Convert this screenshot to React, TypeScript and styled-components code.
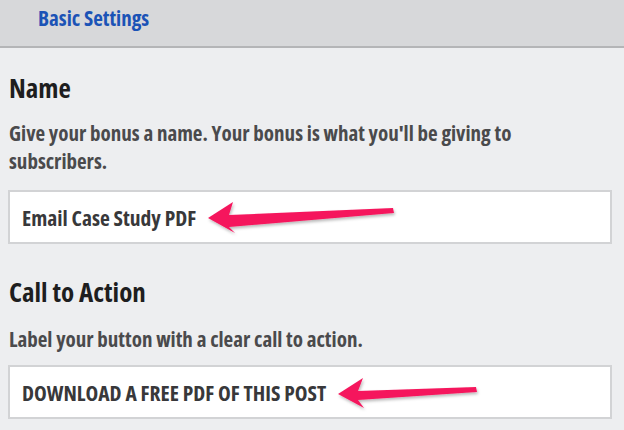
import React from "react";
import styled, { createGlobalStyle } from "styled-components";

const Global = createGlobalStyle`
  html, body { margin: 0; padding: 0; }
  body {
    background: #edeef0;
    font-family: "Open Sans", "Liberation Sans", sans-serif;
    font-stretch: 75%;
    width: 624px;
    height: 430px;
    overflow: hidden;
  }
`;

const Page = styled.div`
  width: 624px;
  height: 430px;
  background: #edeef0;
  display: flex;
  flex-direction: column;
`;

const Header = styled.div`
  height: 46px;
  background: #d7d8da;
  border-bottom: 2px solid #b4b5b7;
  display: flex;
  align-items: flex-start;
  padding-left: 38px;
  flex-shrink: 0;
`;

const HeaderTitle = styled.div`
  color: #1b53b6;
  font-weight: 700;
  font-size: 21px;
  font-stretch: 75%;
  line-height: 36px;
`;

const Body = styled.div`
  padding: 0 12px 0 8px;
  display: flex;
  flex-direction: column;
`;

const Section = styled.section<{ $top: number }>`
  display: flex;
  flex-direction: column;
  margin-top: ${(p) => p.$top}px;
`;

const Heading = styled.h2`
  margin: 0 0 0 1px;
  font-size: 27px;
  font-weight: 700;
  font-stretch: 75%;
  color: #1e1e1f;
  line-height: 32px;
`;

const Description = styled.p<{ $top: number }>`
  margin: ${(p) => p.$top}px 0 0 1px;
  font-size: 21px;
  font-weight: 700;
  font-stretch: 75%;
  color: #4a4a4c;
  line-height: 28px;
`;

const Field = styled.div<{ $top: number }>`
  position: relative;
  margin-top: ${(p) => p.$top}px;
  background: #fff;
  border: 2px solid #d2d3d5;
  display: flex;
  align-items: flex-start;
  padding: 12px 0 0 12px;
  box-sizing: border-box;
  height: 54px;
`;

const FieldText = styled.span`
  font-size: 21.5px;
  font-weight: 700;
  font-stretch: 75%;
  line-height: 28px;
  color: #38383a;
`;

const ArrowSvg = styled.svg`
  position: absolute;
  left: -2px;
  top: -2px;
  width: 604px;
  height: 54px;
  overflow: visible;
  pointer-events: none;
`;

type Pt = [number, number];

function Arrow({ id, pts }: { id: string; pts: Pt[] }) {
  const d = "M" + pts.map((p) => p.join(" ")).join(" L") + " Z";
  return (
    <ArrowSvg viewBox="0 0 604 54">
      <defs>
        <filter id={id} x="-20%" y="-60%" width="140%" height="220%">
          <feDropShadow dx="1" dy="2" stdDeviation="1.5" floodColor="#000" floodOpacity="0.28" />
        </filter>
      </defs>
      <path filter={`url(#${id})`} fill="#f5175d" d={d} />
    </ArrowSvg>
  );
}

const arrow1: Pt[] = [
  [200, 28],
  [225, 12],
  [221, 25],
  [385, 18],
  [386, 23],
  [221, 37],
  [227, 43],
];

const arrow2: Pt[] = [
  [330, 29],
  [355, 13],
  [350, 26],
  [468, 22],
  [469, 27],
  [350, 35],
  [356, 43],
];

export default function App() {
  return (
    <Page>
      <Global />
      <Header>
        <HeaderTitle>Basic Settings</HeaderTitle>
      </Header>
      <Body>
        <Section $top={24}>
          <Heading>Name</Heading>
          <Description $top={15}>
            Give your bonus a name. Your bonus is what you'll be giving to subscribers.
          </Description>
          <Field $top={15}>
            <FieldText>Email Case Study PDF</FieldText>
            <Arrow id="a1" pts={arrow1} />
          </Field>
        </Section>
        <Section $top={32}>
          <Heading>Call to Action</Heading>
          <Description $top={17}>Label your button with a clear call to action.</Description>
          <Field $top={12}>
            <FieldText>DOWNLOAD A FREE PDF OF THIS POST</FieldText>
            <Arrow id="a2" pts={arrow2} />
          </Field>
        </Section>
      </Body>
    </Page>
  );
}
